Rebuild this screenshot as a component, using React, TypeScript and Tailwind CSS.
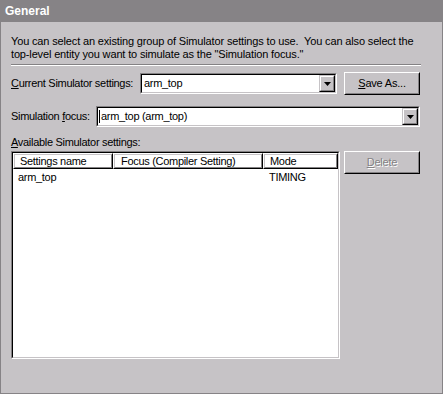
import React from "react";

const Raised = ({ className = "", children }: { className?: string; children?: React.ReactNode }) => (
  <div className={`border border-t-white border-l-white border-r-black border-b-black ${className}`}>
    <div className="w-full h-full border border-t-[#c6c3c6] border-l-[#c6c3c6] border-r-[#848284] border-b-[#848284] flex items-center justify-center">
      {children}
    </div>
  </div>
);

const Sunken = ({ className = "", children }: { className?: string; children?: React.ReactNode }) => (
  <div className={`border border-t-[#848284] border-l-[#848284] border-r-white border-b-white ${className}`}>
    <div className="w-full h-full border border-t-black border-l-black border-r-[#c6c3c6] border-b-[#c6c3c6] bg-white flex">
      {children}
    </div>
  </div>
);

const DropBtn = () => (
  <div className="w-[16px] h-[17px] border border-t-[#c6c3c6] border-l-[#c6c3c6] border-r-black border-b-black">
    <div className="w-full h-full border border-t-white border-l-white border-r-[#848284] border-b-[#848284] bg-[#c6c3c6] flex items-center justify-center">
      <svg width="7" height="4" viewBox="0 0 7 4" className="block">
        <polygon points="0,0 7,0 3.5,4" fill="#000" />
      </svg>
    </div>
  </div>
);

export default function App() {
  return (
    <div
      className="w-[443px] h-[394px] flex flex-col bg-[#c6c3c6] text-[11px] text-black"
      style={{ fontFamily: '"Liberation Sans", Arial, sans-serif' }}
    >
      <div className="h-[22px] shrink-0 bg-[#868386] text-white font-bold text-[12px] leading-[22px] pl-[5px]">
        General
      </div>
      <div className="flex-1 border-l border-r border-b border-[#868386] pl-[10px] pt-[13px]">
        <p className="leading-[13px] w-[420px] tracking-[-0.15px]">
          You can select an existing group of Simulator settings to use.&nbsp; You can also select the
          <br />
          top-level entity you want to simulate as the "Simulation focus."
        </p>
        <div className="mt-[3px] w-[410px] h-[2px] border-t border-t-[#848284] border-b border-b-white" />

        <div className="mt-[6px] flex items-center h-[23px] w-[409px]">
          <div className="w-[129px] leading-[13px] tracking-[-0.3px]">
            <span className="underline">C</span>urrent Simulator settings:
          </div>
          <Sunken className="w-[197px] h-[21px]">
            <div className="flex-1 pl-[2px] leading-[17px] tracking-[-0.3px]">arm_top</div>
            <DropBtn />
          </Sunken>
          <Raised className="ml-[7px] w-[76px] h-[23px]">
            <span className="tracking-[-0.2px]">
              <span className="underline">S</span>ave As...
            </span>
          </Raised>
        </div>

        <div className="mt-[11px] flex items-center h-[21px] w-[409px]">
          <div className="w-[85px] leading-[13px] tracking-[-0.3px]">
            Simulation <span className="underline">f</span>ocus:
          </div>
          <Sunken className="w-[324px] h-[21px]">
            <div className="flex-1 flex items-center pl-[1px]">
              <div className="w-[1px] h-[13px] bg-black" />
              <span className="pl-[1px] leading-[17px] tracking-[-0.3px]">arm_top (arm_top)</span>
            </div>
            <DropBtn />
          </Sunken>
        </div>

        <div className="mt-[9px] leading-[13px] tracking-[-0.3px]">
          <span className="underline">A</span>vailable Simulator settings:
        </div>

        <div className="mt-[2px] flex items-start">
          <Sunken className="w-[329px] h-[208px]">
            <div className="flex flex-col w-full">
              <div className="flex h-[16px] shrink-0">
                <Raised className="w-[100px] h-[16px]">
                  <span className="w-full pl-[5px] leading-[14px] tracking-[-0.3px]">Settings name</span>
                </Raised>
                <Raised className="w-[150px] h-[16px]">
                  <span className="w-full pl-[6px] leading-[14px] tracking-[-0.3px]">Focus (Compiler Setting)</span>
                </Raised>
                <Raised className="w-[75px] h-[16px]">
                  <span className="w-full pl-[5px] leading-[14px] tracking-[-0.3px]">Mode</span>
                </Raised>
              </div>
              <div className="flex mt-[2px] leading-[13px] tracking-[-0.3px]">
                <div className="w-[250px] pl-[5px]">arm_top</div>
                <div className="pl-[6px]">TIMING</div>
              </div>
            </div>
          </Sunken>
          <Raised className="ml-[4px] w-[76px] h-[23px]">
            <span className="text-[#848284] tracking-[-0.2px]" style={{ textShadow: "1px 1px 0 #fff" }}>
              <span className="underline">D</span>elete
            </span>
          </Raised>
        </div>
      </div>
    </div>
  );
}
